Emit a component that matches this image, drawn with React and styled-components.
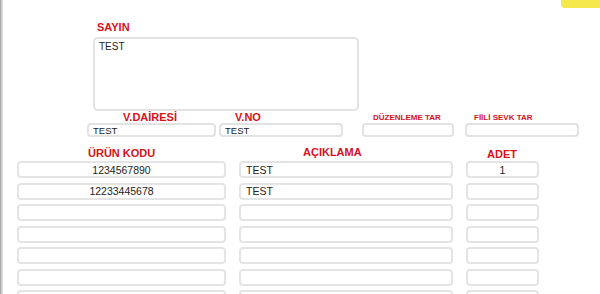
import React from "react";
import styled, { createGlobalStyle } from "styled-components";

const Global = createGlobalStyle`
  html, body { margin: 0; padding: 0; background: #fff; }
  body { font-family: "Liberation Sans", Arial, sans-serif; }
  * { box-sizing: border-box; }
`;

const Page = styled.div`
  position: relative;
  width: 600px;
  height: 294px;
  overflow: hidden;
  padding-top: 21px;
  background: linear-gradient(to right, #9a9a9a 0, #bcbcbc 1px, #d6d6d6 2px, #efefef 3px, #fff 3px);
`;

const YellowTab = styled.div`
  position: absolute;
  top: 0;
  right: 0;
  width: 39px;
  height: 8px;
  background: #f4e84c;
  border-bottom-left-radius: 4px;
`;

const Label = styled.div`
  color: #d8111d;
  font-weight: bold;
  font-size: ${(p) => p.$size || 11}px;
  line-height: ${(p) => p.$lh || 12}px;
  padding-left: ${(p) => p.$offset || 0}px;
  white-space: nowrap;
`;

const CustomerBlock = styled.section`
  margin-left: 93px;
  width: 266px;
  display: flex;
  flex-direction: column;
  gap: 4px;
`;

const NoteArea = styled.textarea`
  width: 266px;
  height: 74px;
  resize: none;
  border: 2px solid #e2e2e2;
  border-radius: 5px;
  padding: 2px 4px;
  font-family: "Liberation Sans", Arial, sans-serif;
  font-size: 10px;
  color: #222;
  background: #fff;
  outline: none;
`;

const MetaRow = styled.div`
  display: flex;
  margin-top: 1px;
  padding-left: 87px;
`;

const MetaField = styled.div`
  display: flex;
  flex-direction: column;
  width: ${(p) => p.$w}px;
  margin-left: ${(p) => p.$ml || 0}px;
`;

const MetaInput = styled.input`
  width: 100%;
  height: 14px;
  border: 2px solid #e2e2e2;
  border-radius: 4px;
  padding: 0 4px;
  font-family: "Liberation Sans", Arial, sans-serif;
  font-size: 9.5px;
  color: #222;
  background: #fff;
  outline: none;
`;

const ItemsGrid = styled.div`
  display: grid;
  grid-template-columns: 209px 214px 73px;
  column-gap: 13px;
  row-gap: 4.5px;
  padding-left: 17px;
  margin-top: 10px;
`;

const ColHeader = styled(Label)`
  margin-bottom: -3.5px;
  margin-top: ${(p) => p.$mt || 0}px;
`;

const CellInput = styled.input`
  width: 100%;
  height: 17px;
  border: 2px solid #e4e4e4;
  border-radius: 4px;
  padding: 0 5px;
  font-family: "Liberation Sans", Arial, sans-serif;
  font-size: 10.5px;
  color: #222;
  background: #fff;
  text-align: ${(p) => p.$align || "left"};
  outline: none;
`;

const rows = [
  { code: "1234567890", desc: "TEST", qty: "1" },
  { code: "12233445678", desc: "TEST", qty: "" },
  { code: "", desc: "", qty: "" },
  { code: "", desc: "", qty: "" },
  { code: "", desc: "", qty: "" },
  { code: "", desc: "", qty: "" },
  { code: "", desc: "", qty: "" },
];

const metaFields = [
  { label: "V.DAİRESİ", w: 129, ml: 0, offset: 36, value: "TEST" },
  { label: "V.NO", w: 124, ml: 3, offset: 16, value: "TEST" },
  { label: "DÜZENLEME TAR", w: 92, ml: 19, offset: 11, value: "", small: true },
  { label: "FİİLİ SEVK TAR", w: 114, ml: 11, offset: 9, value: "", small: true },
];

export default function App() {
  return (
    <>
      <Global />
      <Page>
        <YellowTab />
        <CustomerBlock>
          <Label $offset={4}>SAYIN</Label>
          <NoteArea readOnly defaultValue="TEST" />
        </CustomerBlock>
        <MetaRow>
          {metaFields.map((f) => (
            <MetaField key={f.label} $w={f.w} $ml={f.ml}>
              <Label $offset={f.offset} $lh={11} $size={f.small ? 8 : 11}>
                {f.label}
              </Label>
              <MetaInput readOnly defaultValue={f.value} />
            </MetaField>
          ))}
        </MetaRow>
        <ItemsGrid>
          <ColHeader $offset={71}>ÜRÜN KODU</ColHeader>
          <ColHeader $offset={64} $mt={-1}>AÇIKLAMA</ColHeader>
          <ColHeader $offset={21} $mt={1}>ADET</ColHeader>
          {rows.map((r, i) => (
            <React.Fragment key={i}>
              <CellInput readOnly defaultValue={r.code} $align="center" />
              <CellInput readOnly defaultValue={r.desc} />
              <CellInput readOnly defaultValue={r.qty} $align="center" />
            </React.Fragment>
          ))}
        </ItemsGrid>
      </Page>
    </>
  );
}
